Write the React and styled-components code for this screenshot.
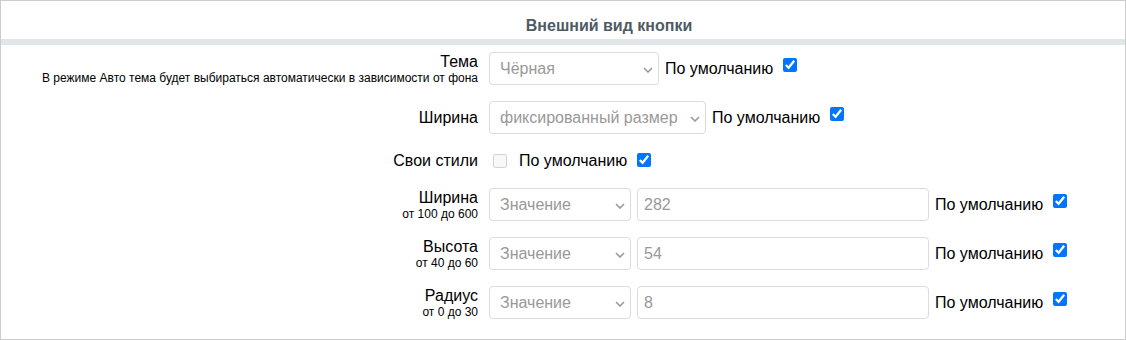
import React from "react";
import styled, { createGlobalStyle } from "styled-components";

const GlobalStyle = createGlobalStyle`
  body {
    margin: 0;
    background: #fff;
    font-family: "Liberation Sans", Arial, sans-serif;
  }
`;

const Panel = styled.div`
  width: 1126px;
  height: 340px;
  box-sizing: border-box;
  border: 1px solid #cccccc;
  background: #fff;
`;

const Title = styled.div`
  height: 38px;
  box-sizing: border-box;
  display: flex;
  align-items: flex-end;
  justify-content: center;
  padding: 0 0 4px 92px;
  font-size: 16px;
  font-weight: bold;
  color: #4d5b63;
`;

const Bar = styled.div`
  height: 6px;
  background: #e1e7e9;
`;

const Form = styled.div`
  display: grid;
  grid-template-columns: 477px 1fr;
  column-gap: 11px;
  row-gap: 16px;
  align-items: center;
  padding-top: 7px;
`;

const Label = styled.div`
  text-align: right;
  color: #000;
  font-size: 16px;
  line-height: 18px;
`;

const Hint = styled.div`
  font-size: 12px;
  line-height: 14px;
`;

const Controls = styled.div`
  display: flex;
  align-items: center;
  height: ${(p) => p.$h || 33}px;
`;

const SelectBox = styled.div`
  position: relative;
  width: ${(p) => p.$w}px;
  height: 33px;
`;

const Select = styled.select`
  appearance: none;
  width: 100%;
  height: 100%;
  box-sizing: border-box;
  border: 1px solid #dcdcdc;
  border-radius: 4px;
  padding: 0 24px 0 10px;
  background: #fff;
  color: #999;
  font-family: "Liberation Sans", Arial, sans-serif;
  font-size: 16px;
  outline: none;
`;

const Chevron = styled.svg`
  position: absolute;
  right: 6px;
  top: 50%;
  margin-top: -2px;
  pointer-events: none;
`;

const Field = styled.input`
  width: 292px;
  height: 33px;
  box-sizing: border-box;
  margin-left: 6px;
  padding: 0 6px;
  border: 1px solid #dcdcdc;
  border-radius: 4px;
  color: #999;
  font-family: "Liberation Sans", Arial, sans-serif;
  font-size: 16px;
  outline: none;
`;

const DefaultText = styled.span`
  margin-left: ${(p) => p.$ml || 6}px;
  font-size: 16px;
  color: #000;
  white-space: nowrap;
`;

const Check = styled.input`
  width: 14px;
  height: 14px;
  margin: ${(p) => (p.disabled ? "0 0 0 4px" : `0 0 ${p.$lift ?? 8}px 10px`)};
`;

const Dropdown = ({ width, value }) => (
  <SelectBox $w={width}>
    <Select defaultValue={value}>
      <option>{value}</option>
    </Select>
    <Chevron width="10" height="6" viewBox="0 0 10 6">
      <path d="M1 1l4 4 4-4" fill="none" stroke="#9a9a9a" strokeWidth="1.6" />
    </Chevron>
  </SelectBox>
);

const ByDefault = () => (
  <>
    <DefaultText>По умолчанию</DefaultText>
    <Check type="checkbox" defaultChecked />
  </>
);

const sizes = [
  { label: "Ширина", hint: "от 100 до 600", value: "282" },
  { label: "Высота", hint: "от 40 до 60", value: "54" },
  { label: "Радиус", hint: "от 0 до 30", value: "8" },
];

export default function App() {
  return (
    <>
      <GlobalStyle />
      <Panel>
        <Title>Внешний вид кнопки</Title>
        <Bar />
        <Form>
          <Label>
            Тема
            <Hint>В режиме Авто тема будет выбираться автоматически в зависимости от фона</Hint>
          </Label>
          <Controls>
            <Dropdown width={170} value="Чёрная" />
            <ByDefault />
          </Controls>

          <Label>Ширина</Label>
          <Controls>
            <Dropdown width={217} value="фиксированный размер" />
            <ByDefault />
          </Controls>

          <Label>Свои стили</Label>
          <Controls $h={22}>
            <Check type="checkbox" disabled />
            <DefaultText $ml={12}>По умолчанию</DefaultText>
            <Check type="checkbox" defaultChecked $lift={2} />
          </Controls>

          {sizes.map((s) => (
            <React.Fragment key={s.label}>
              <Label>
                {s.label}
                <Hint>{s.hint}</Hint>
              </Label>
              <Controls>
                <Dropdown width={142} value="Значение" />
                <Field defaultValue={s.value} />
                <ByDefault />
              </Controls>
            </React.Fragment>
          ))}
        </Form>
      </Panel>
    </>
  );
}
